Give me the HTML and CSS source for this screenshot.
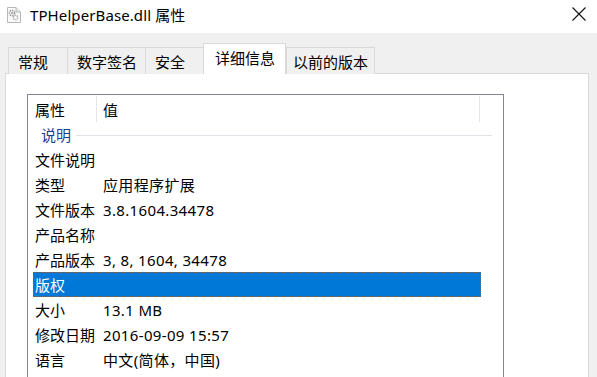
FILE: index.html
```html
<!DOCTYPE html>
<html>
<head>
<meta charset="utf-8">
<link rel="stylesheet" href="styles.css">
</head>
<body>
<div class="window">
  <div class="titlebar">
    <svg class="app-icon" width="14" height="16" viewBox="0 0 14 16">
      <path d="M0.5 0.5 H9 L13.5 5 V15.5 H0.5 Z" fill="#fafafa" stroke="#b8b8b8"/>
      <path d="M9 0.5 V5 H13.5" fill="#e8e8e8" stroke="#b8b8b8"/>
      <circle cx="5" cy="6" r="2.6" fill="none" stroke="#9a9a9a" stroke-width="1.6" stroke-dasharray="1.4 1"/>
      <circle cx="5" cy="6" r="1" fill="#9a9a9a"/>
      <circle cx="8.5" cy="10.5" r="2.2" fill="none" stroke="#a8a8a8" stroke-width="1.4" stroke-dasharray="1.2 0.9"/>
    </svg>
    <span class="title">TPHelperBase.dll 属性</span>
    <span class="close">
      <svg width="14" height="14" viewBox="0 0 14 14"><path d="M0.5 0.5 L13.5 13.5 M13.5 0.5 L0.5 13.5" stroke="#111" stroke-width="1.1"/></svg>
    </span>
  </div>
  <div class="body">
    <div class="tabs">
      <div class="tab">常规</div>
      <div class="tab">数字签名</div>
      <div class="tab">安全</div>
      <div class="tab active">详细信息</div>
      <div class="tab">以前的版本</div>
    </div>
    <div class="panel">
      <div class="listview">
        <div class="lv-header">
          <div class="lv-hcol key">属性</div>
          <div class="lv-hcol val">值</div>
        </div>
        <div class="lv-group"><span class="group-name">说明</span><span class="group-line"></span></div>
        <div class="lv-row"><span class="k">文件说明</span><span class="v"></span></div>
        <div class="lv-row"><span class="k">类型</span><span class="v">应用程序扩展</span></div>
        <div class="lv-row"><span class="k">文件版本</span><span class="v">3.8.1604.34478</span></div>
        <div class="lv-row"><span class="k">产品名称</span><span class="v"></span></div>
        <div class="lv-row"><span class="k">产品版本</span><span class="v">3, 8, 1604, 34478</span></div>
        <div class="lv-row selected"><span class="k">版权</span><span class="v"></span></div>
        <div class="lv-row"><span class="k">大小</span><span class="v">13.1 MB</span></div>
        <div class="lv-row"><span class="k">修改日期</span><span class="v">2016-09-09 15:57</span></div>
        <div class="lv-row"><span class="k">语言</span><span class="v">中文(简体，中国)</span></div>
      </div>
    </div>
  </div>
</div>
</body>
</html>
```
FILE: styles.css
```css
* { box-sizing: border-box; }
html, body {
  margin: 0;
  padding: 0;
  width: 597px;
  height: 377px;
  overflow: hidden;
  background: #ffffff;
}
body {
  font-family: "Noto Sans", "Noto Sans CJK SC", sans-serif;
  font-size: 15px;
  color: #000;
}
.window {
  width: 597px;
  height: 377px;
  display: flex;
  flex-direction: column;
}
.titlebar {
  height: 33px;
  flex: 0 0 33px;
  background: #fff;
  display: flex;
  align-items: center;
  padding-left: 7px;
}
.app-icon {
  margin-right: 9px;
  margin-top: -3px;
}
.title {
  font-family: "Noto Sans", "Noto Sans CJK SC", sans-serif;
  font-size: 15px;
  letter-spacing: 0.1px;
  margin-top: -4px;
}
.close {
  margin-left: auto;
  margin-right: 11px;
  margin-top: -6px;
  display: flex;
}
.body {
  flex: 1;
  background: #f0f0f0;
  padding-top: 10px;
  overflow: hidden;
}
.tabs {
  display: flex;
  align-items: flex-end;
  padding-left: 8px;
  height: 31px;
  margin-bottom: -1px;
  position: relative;
  z-index: 1;
}
.tab {
  font-family: "Noto Sans CJK SC", sans-serif;
  height: 27px;
  min-width: 60px;
  padding: 3px 8px 0 9px;
  border: 1px solid #d9d9d9;
  border-bottom: none;
  margin-right: -1px;
  background: #f0f0f0;
  line-height: 22px;
  white-space: nowrap;
}
.tab:last-child {
  padding: 3px 6px 0 6px;
}
.tab.active {
  height: 31px;
  background: #fff;
  padding: 3px 10px 0 11px;
  line-height: 22px;
  margin-left: -1px;
  margin-right: 0;
  position: relative;
  z-index: 2;
}
.panel {
  margin-left: 5px;
  width: 584px;
  height: 320px;
  background: #fff;
  border: 1px solid #d9d9d9;
  padding: 20px 0 0 21px;
}
.listview {
  width: 477px;
  height: 320px;
  border: 1px solid #828790;
  border-bottom: none;
  font-family: "Noto Sans CJK SC", sans-serif;
}
.lv-header {
  display: flex;
  height: 27px;
  align-items: stretch;
}
.lv-hcol {
  display: flex;
  align-items: center;
  padding-top: 1px;
}
.lv-hcol.key {
  width: 69px;
  padding-left: 7px;
  border-right: 1px solid #e5e5e5;
  margin: 1px 0 0 0;
}
.lv-hcol.val {
  width: 383px;
  padding-left: 6px;
  border-right: 1px solid #e5e5e5;
  margin-top: 1px;
}
.lv-group {
  height: 25px;
  display: flex;
  align-items: center;
  padding-left: 13px;
  width: 464px;
}
.group-name {
  color: #1e3c96;
}
.group-line {
  flex: 1;
  height: 1px;
  background: #dfe5ea;
  margin-left: 5px;
  margin-top: 1px;
}
.lv-row {
  height: 25px;
  margin-left: 5px;
  width: 448px;
  display: flex;
  align-items: center;
  padding-left: 2px;
  white-space: nowrap;
}
.lv-row .k {
  width: 68px;
}
.lv-row .v {
  font-family: "Noto Sans", "Noto Sans CJK SC", sans-serif;
  letter-spacing: 0.35px;
}
.lv-row.selected {
  background: #0078d7;
  color: #fff;
  outline: 1px dotted #5a6b80;
  outline-offset: -1px;
}
```
